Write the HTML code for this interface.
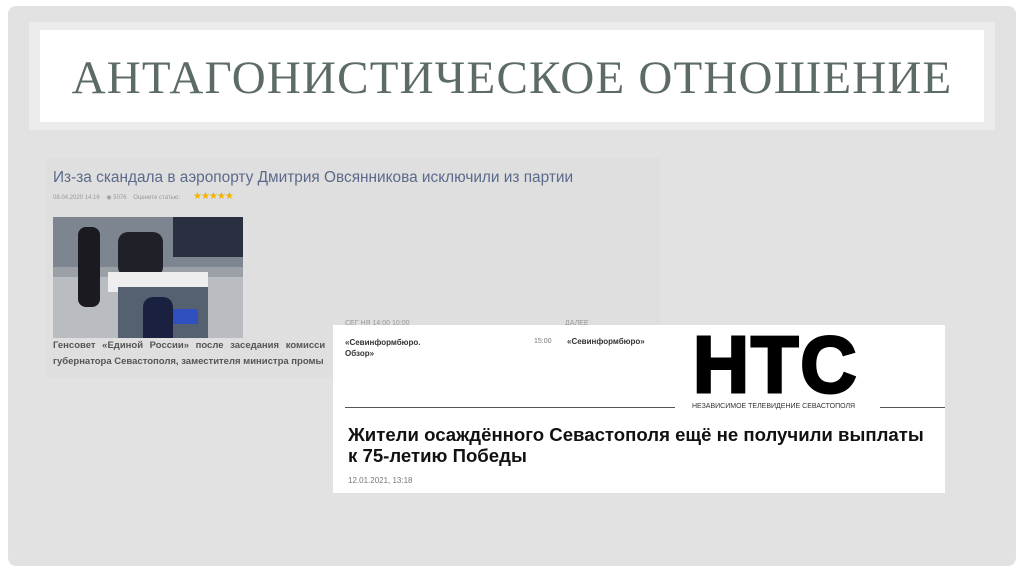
<!DOCTYPE html>
<html><head><meta charset="utf-8">
<style>
html,body{margin:0;padding:0;background:#fff;width:1024px;height:574px;overflow:hidden;position:relative;font-family:"Liberation Sans",sans-serif}
.card{position:absolute;left:8px;top:6px;width:1008px;height:560px;background:#e2e2e2;border-radius:8px}
.tb{position:absolute;left:29px;top:22px;width:966px;height:108px;background:#ececec}
.ti{position:absolute;left:40px;top:30px;width:944px;height:92px;background:#fff}
.title{position:absolute;left:40px;top:32px;width:944px;height:92px;line-height:92px;text-align:center;font-family:"Liberation Serif",serif;font-size:47px;color:#5c6b64;letter-spacing:1.2px}
.art{position:absolute;left:46px;top:158px;width:614px;height:220px;background:#dfdfdf}
.h1{position:absolute;left:53px;top:169px;font-size:15.4px;color:#5b6a8a;white-space:nowrap}
.meta{position:absolute;left:53px;top:194px;font-size:6px;color:#999;white-space:nowrap}
.stars{position:absolute;left:193px;top:191px;color:#f0b400;font-size:10px;letter-spacing:-1px}
.img{position:absolute;left:53px;top:217px;width:190px;height:121px;background:#9aa0a6;overflow:hidden}
.p{position:absolute;left:53px;font-size:9.5px;font-weight:bold;color:#555;white-space:nowrap}
.w{position:absolute;left:333px;top:325px;width:612px;height:168px;background:#fff}
</style></head><body>
<div class="card"></div>
<div class="tb"></div><div class="ti"></div>
<div class="title">АНТАГОНИСТИЧЕСКОЕ ОТНОШЕНИЕ</div>
<div class="art"></div>
<div class="h1">Из-за скандала в аэропорту Дмитрия Овсянникова исключили из партии</div>
<div class="meta">08.04.2020 14:16 &nbsp;&nbsp; ◉ 5076 &nbsp;&nbsp; Оцените статью:</div>
<div class="stars">★★★★★</div>
<div class="img">
 <div style="position:absolute;left:0;top:0;width:190px;height:50px;background:#7d8590"></div>
 <div style="position:absolute;left:120px;top:0;width:70px;height:40px;background:#2a3040"></div>
 <div style="position:absolute;left:0;top:60px;width:190px;height:61px;background:#b9bcc0"></div>
 <div style="position:absolute;left:25px;top:10px;width:22px;height:80px;background:#1a1a20;border-radius:8px"></div>
 <div style="position:absolute;left:65px;top:15px;width:45px;height:45px;background:#202028;border-radius:10px"></div>
 <div style="position:absolute;left:55px;top:55px;width:100px;height:20px;background:#eee"></div>
 <div style="position:absolute;left:65px;top:70px;width:90px;height:51px;background:#556070"></div>
 <div style="position:absolute;left:90px;top:80px;width:30px;height:41px;background:#1a2040;border-radius:10px 10px 0 0"></div>
 <div style="position:absolute;left:120px;top:92px;width:25px;height:15px;background:#3050c0"></div>
</div>
<div class="p" style="top:340px;word-spacing:4px">Генсовет «Единой России» после заседания комисси</div>
<div class="p" style="top:356px">губернатора Севастополя, заместителя министра промы</div>
<div class="w"></div>
<div style="position:absolute;left:345px;top:320px;width:80px;height:5px;overflow:hidden;font-size:7px;color:#999">СЕГ НЯ 14:00 10:00</div>
<div style="position:absolute;left:565px;top:320px;width:40px;height:5px;overflow:hidden;font-size:7px;color:#999">ДАЛЕЕ</div>
<div style="position:absolute;left:345px;top:337px;font-size:8px;color:#333;line-height:11px;font-weight:bold">«Севинформбюро.<br>Обзор»</div>
<div style="position:absolute;left:534px;top:338px;font-size:7px;color:#777">15:00</div>
<div style="position:absolute;left:567px;top:337px;font-size:8px;color:#333;font-weight:bold">«Севинформбюро»</div>
<div style="position:absolute;left:693px;top:325px;font-size:80px;font-weight:bold;color:#000;letter-spacing:2px;line-height:80px;-webkit-text-stroke:3px #000;transform:scaleX(0.97);transform-origin:left;white-space:nowrap">НТС</div>
<div style="position:absolute;left:345px;top:407px;width:330px;height:1px;background:#555"></div>
<div style="position:absolute;left:880px;top:407px;width:65px;height:1px;background:#555"></div>
<div style="position:absolute;left:692px;top:403px;font-size:7px;color:#333;white-space:nowrap">НЕЗАВИСИМОЕ ТЕЛЕВИДЕНИЕ СЕВАСТОПОЛЯ</div>
<div style="position:absolute;left:348px;top:424px;font-size:18.6px;font-weight:bold;color:#111;line-height:21px;white-space:nowrap">Жители осаждённого Севастополя ещё не получили выплаты<br>к 75-летию Победы</div>
<div style="position:absolute;left:348px;top:476px;font-size:8px;color:#777">12.01.2021, 13:18</div>
</body></html>
